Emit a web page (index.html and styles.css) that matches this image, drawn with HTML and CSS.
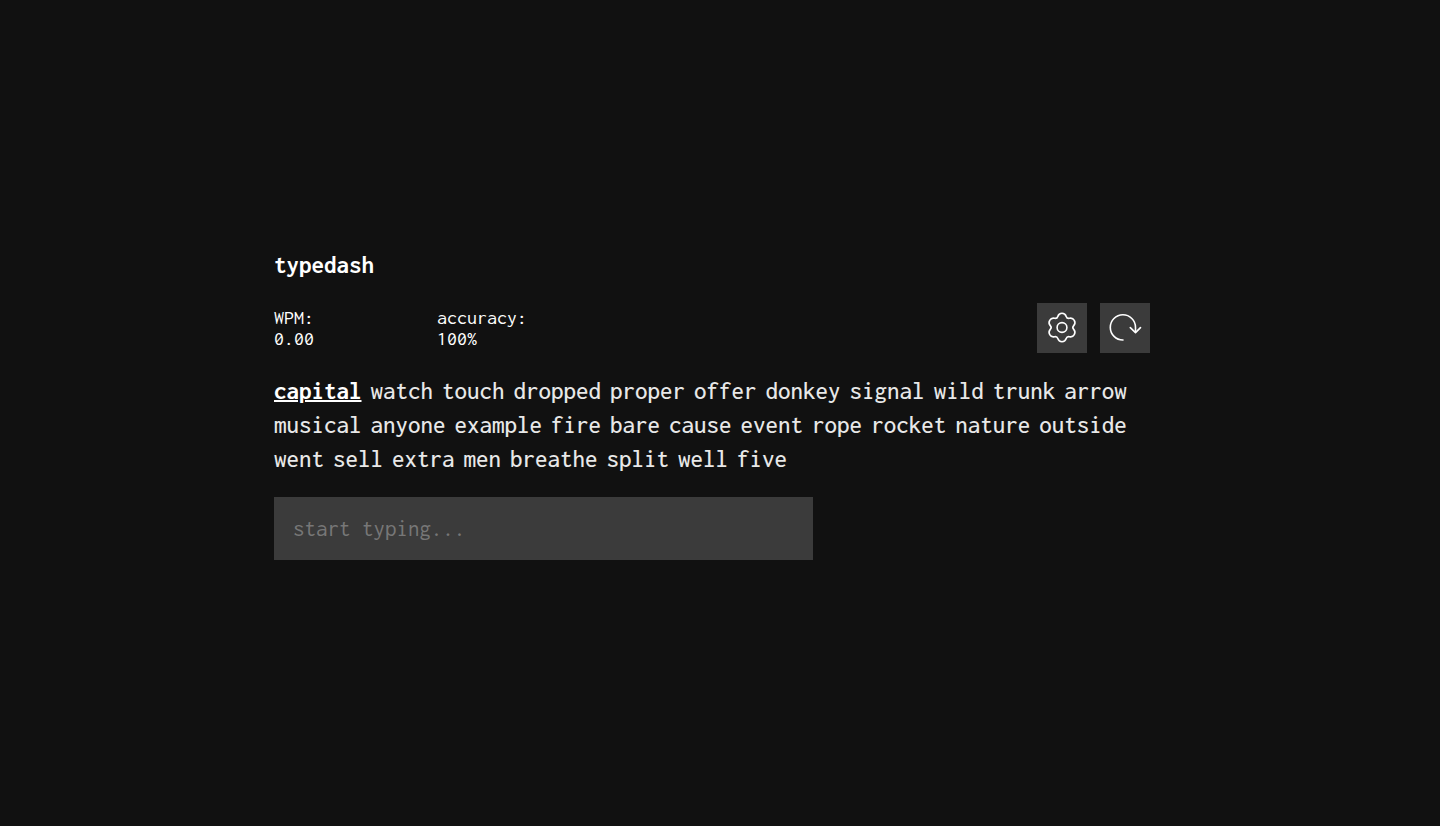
FILE: index.html
```html
<!DOCTYPE html>
<html lang="en">
<head>
  <meta charset="utf-8">
  <meta name="viewport" content="width=device-width, initial-scale=1">
  <title>typedash</title>
  <link rel="stylesheet" href="styles.css">
</head>
<body>
  <main class="app">
    <h1 class="title">typedash</h1>
    <div class="toolbar">
      <div class="stats">
        <div class="stat">WPM:<br>0.00</div>
        <div class="stat">accuracy:<br>100%</div>
      </div>
      <div class="actions">
        <button class="action" type="button" aria-label="Settings">
          <svg class="icon" viewBox="0 0 50 50" aria-hidden="true">
            <g transform="translate(25 24.5)">
              <path d="M11.71 1.91A4.4 4.4 0 0 1 7.51 9.18A2.8 2.8 0 0 0 4.2 11.09A4.4 4.4 0 0 1 -4.2 11.09A2.8 2.8 0 0 0 -7.51 9.18A4.4 4.4 0 0 1 -11.71 1.91A2.8 2.8 0 0 0 -11.71 -1.91A4.4 4.4 0 0 1 -7.51 -9.18A2.8 2.8 0 0 0 -4.2 -11.09A4.4 4.4 0 0 1 4.2 -11.09A2.8 2.8 0 0 0 7.51 -9.18A4.4 4.4 0 0 1 11.71 -1.91A2.8 2.8 0 0 0 11.71 1.91Z"/>
              <circle r="4.9"/>
            </g>
          </svg>
        </button>
        <button class="action" type="button" aria-label="Restart">
          <svg class="icon" viewBox="0 0 50 50" aria-hidden="true">
            <path d="M23 37A12.6 12.6 0 1 1 35.5 24.4V29"/>
            <path d="M30.3 24.6L35.5 29.6L40.5 24.6"/>
          </svg>
        </button>
      </div>
    </div>
    <div class="words">
      <span class="current">capital</span>
      <span>watch</span> <span>touch</span> <span>dropped</span> <span>proper</span>
      <span>offer</span> <span>donkey</span> <span>signal</span> <span>wild</span>
      <span>trunk</span> <span>arrow</span> <span>musical</span> <span>anyone</span>
      <span>example</span> <span>fire</span> <span>bare</span> <span>cause</span>
      <span>event</span> <span>rope</span> <span>rocket</span> <span>nature</span>
      <span>outside</span> <span>went</span> <span>sell</span> <span>extra</span>
      <span>men</span> <span>breathe</span> <span>split</span> <span>well</span>
      <span>five</span>
    </div>
    <input class="entry" type="text" aria-label="Type the words" placeholder="start typing..." autocomplete="off">
  </main>
</body>
</html>
```

FILE: styles.css
```css
* {
  box-sizing: border-box;
}

body {
  display: flex;
  align-items: center;
  justify-content: center;
  min-height: 100vh;
  margin: 0;
  background: #111;
  color: #fff;
  font-family: Inconsolata, "DejaVu Sans Mono", monospace;
}

.app {
  width: 100%;
  max-width: 892px;
  padding: 0 16px 16px 0;
}

.title {
  margin: 0 0 24px;
  font-size: 25px;
  font-weight: 700;
  line-height: 28px;
}

.toolbar {
  display: flex;
  align-items: center;
  justify-content: space-between;
  margin-bottom: 21px;
}

.stats {
  display: grid;
  grid-template-columns: 163px auto;
  font-size: 20px;
  line-height: 21px;
}

.actions {
  display: flex;
  gap: 13px;
}

.action {
  width: 50px;
  height: 50px;
  padding: 0;
  border: 0;
  background: #3b3b3b;
  color: #fff;
  cursor: pointer;
}

.icon {
  display: block;
  width: 100%;
  fill: none;
  stroke: currentColor;
  stroke-width: 1.6;
  stroke-linecap: round;
  stroke-linejoin: round;
}

.words {
  display: flex;
  flex-wrap: wrap;
  column-gap: 9px;
  margin-bottom: 21px;
  color: #e8e8e8;
  font-size: 25px;
  font-weight: 500;
  line-height: 34px;
}

.current {
  color: #fff;
  font-weight: 700;
  text-decoration: underline;
  text-decoration-thickness: 2px;
}

.entry {
  display: block;
  width: 539px;
  max-width: 100%;
  height: 63px;
  padding: 0 19px;
  border: 0;
  border-radius: 0;
  outline: 0;
  background: #3b3b3b;
  color: #fff;
  font-family: Inconsolata, "DejaVu Sans Mono", monospace;
  font-size: 23px;
}

.entry::placeholder {
  color: #777;
}
```
